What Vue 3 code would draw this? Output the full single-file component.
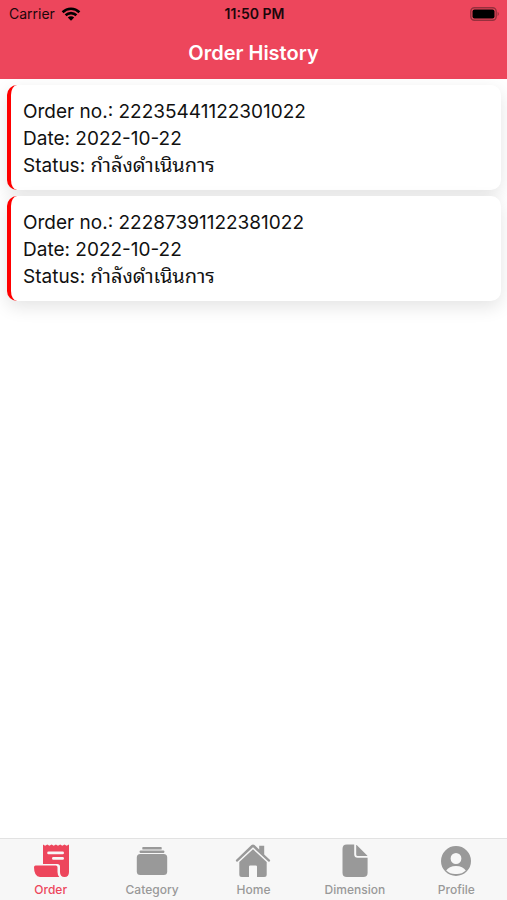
<template>
  <div class="screen">
    <header class="header">
      <div class="status-bar">
        <div class="carrier">
          <span>Carrier</span>
          <svg class="wifi" viewBox="0 0 20 14" aria-hidden="true">
            <path d="M1.6 5.2a12 12 0 0 1 16.8 0" />
            <path d="M4.6 8.3a7.8 7.8 0 0 1 10.8 0" />
            <path class="wifi-dot" d="M10 13.8 6.8 10.6a4.6 4.6 0 0 1 6.4 0z" />
          </svg>
        </div>
        <time class="clock">11:50 PM</time>
        <svg class="battery" viewBox="0 0 30 14" aria-hidden="true">
          <rect class="battery-frame" x="0.8" y="0.8" width="25.4" height="12.4" rx="3.6" />
          <rect x="2.5" y="2.5" width="22" height="9" rx="2" />
          <path class="battery-tip" d="M27.6 4.8q2.6 2.2 0 4.4z" />
        </svg>
      </div>
      <h1 class="title">Order History</h1>
    </header>

    <main class="orders">
      <article v-for="order in orders" :key="order.no" class="card">
        <p>Order no.: {{ order.no }}</p>
        <p>Date: {{ order.date }}</p>
        <p>Status: <span class="thai" lang="th">{{ order.status }}</span></p>
      </article>
    </main>

    <nav class="tabs">
      <a
        v-for="tab in tabs"
        :key="tab.label"
        href="#"
        class="tab"
        :class="{ active: tab.label === current }"
        @click.prevent="current = tab.label"
      >
        <svg class="tab-icon" viewBox="0 0 36 36" aria-hidden="true">
          <path v-for="d in tab.paths" :key="d" :d="d" fill-rule="evenodd" />
        </svg>
        <span>{{ tab.label }}</span>
      </a>
    </nav>
  </div>
</template>

<script setup>
import { ref } from 'vue';

const orders = [
  { no: '22235441122301022', date: '2022-10-22', status: 'กำลังดำเนินการ' },
  { no: '22287391122381022', date: '2022-10-22', status: 'กำลังดำเนินการ' },
];

const current = ref('Order');

const tabs = [
  {
    label: 'Order',
    paths: [
      // paper with torn top edge and two text lines
      'M10 1.6l2.1 1.2 2.2-1.2 2.1 1.2 2.2-1.2 2.1 1.2 2.2-1.2 2.1 1.2 2.2-1.2 2.1 1.2 2.2-1.2 2.1 1.2L36 1.6V29q0 5-4.4 5-4.6 0-4.6-5v-5.3q0-2.8-2.8-2.8H10zM15.6 8.5a1.4 1.4 0 0 0 0 2.8h14a1.4 1.4 0 0 0 0-2.8zM20.4 14a1.4 1.4 0 0 0 0 2.8h9.2a1.4 1.4 0 0 0 0-2.8z',
      // rolled end
      'M2.6 22.5h20.2q1.7 0 1.7 1.7V29q0 3 1.8 5H7Q1 33.4 1 24.2q0-1.7 1.6-1.7z',
    ],
  },
  {
    label: 'Category',
    paths: [
      'M9 4h18q.7 0 .7.8v1.1q0 .7-.7.7H9q-.7 0-.7-.7V4.8Q8.3 4 9 4z',
      'M6.5 7.5h23q.8 0 .8.8v.9q0 .7-.8.7h-23q-.8 0-.8-.7v-.9q0-.8.8-.8z',
      'M6.3 10.9h23.4q3.5 0 3.5 3.5v14.2q0 3.5-3.5 3.5H6.3q-3.5 0-3.5-3.5V14.4q0-3.5 3.5-3.5z',
    ],
  },
  {
    label: 'Home',
    paths: [
      'M18 1.5q.8 0 1.5.6l4.7 4.5V2.8h5v8.6l5.6 5.3q.8.8.1 1.6t-1.6.1L18 4.3 2.7 18.4q-.9.7-1.6-.1t.1-1.6L16.5 2.1Q17.200 1.5 18 1.5z',
      'M18 6.2 31.7 19v12.5q0 2.5-2.5 2.5H22V23.6q0-1.2-1.2-1.2h-5.6q-1.2 0-1.2 1.2V34H6.8q-2.5 0-2.5-2.5V19z',
    ],
  },
  {
    label: 'Dimension',
    paths: [
      'M9.8 1.6h7.4v9.7q0 3.5 3.5 3.5h9.9v14.9q0 4.3-4.3 4.3H9.8q-4.3 0-4.3-4.3V5.9q0-4.3 4.3-4.3z',
      'M19.2 2.3q0-.7.5-.2L30.2 12.6q.5.5-.2.5h-9.300q-1.5 0-1.5-1.5z',
    ],
  },
  {
    label: 'Profile',
    paths: [
      'M18 3a15 15 0 1 0 0 30a15 15 0 1 0 0-30zM18 10a5.4 5.5 0 1 1 0 11a5.4 5.5 0 1 1 0-11zM18 23c4.6 0 8.1 1.8 9.8 4.5A13 13 0 0 1 18 31a13 13 0 0 1-9.8-3.5C9.9 24.8 13.4 23 18 23z',
    ],
  },
];
</script>

<style>
body {
  background: #fff;
}
</style>

<style scoped>
.screen {
  display: flex;
  flex-direction: column;
  min-height: 100vh;
  color: #111;
  font-family: Inter, 'Liberation Sans', sans-serif;
}

.header {
  height: 79px;
  background: #ed465c;
}

.status-bar {
  display: grid;
  grid-template-columns: 1fr auto 1fr;
  align-items: center;
  height: 27px;
  padding: 0 7px 0 9px;
  color: #1c070b;
  font-size: 14px;
  line-height: 27px;
}

.carrier {
  display: flex;
  align-items: center;
  gap: 6px;
}

.wifi {
  width: 20px;
  height: 14px;
  fill: none;
  stroke: #000;
  stroke-width: 2.6;
}

.wifi-dot {
  fill: #000;
  stroke: none;
}

.clock {
  font-weight: 600;
}

.battery {
  justify-self: end;
  width: 30px;
  height: 14px;
}

.battery-frame {
  fill: none;
  stroke: #96303d;
  stroke-width: 1.4;
}

.battery-tip {
  fill: #96303d;
}

.title {
  margin: 0;
  color: #fff;
  font-size: 20px;
  font-weight: 600;
  line-height: 52px;
  text-align: center;
}

.orders {
  flex: 1;
  display: flex;
  flex-direction: column;
  gap: 6px;
  padding: 6px 6px 0 7px;
}

.card {
  padding: 13px 12px 11px;
  border-left: 4px solid #f00;
  border-radius: 10px;
  background: #fff;
  box-shadow: 0 6px 18px rgba(0, 0, 0, 0.11);
  font-size: 19px;
  line-height: 27px;
}

.card p {
  margin: 0;
}

.thai {
  font-family: 'Noto Sans Thai Looped', 'Noto Looped Thai', Loma, Garuda, Waree, 'Noto Serif Thai', 'Noto Sans Thai', sans-serif;
  font-size: 20px;
  line-height: 1;
}

.tabs {
  display: grid;
  grid-template-columns: repeat(5, 1fr);
  height: 61px;
  border-top: 1px solid #e2e2e2;
  background: #f7f7f7;
}

.tab {
  display: flex;
  flex-direction: column;
  align-items: center;
  gap: 3px;
  padding-top: 4px;
  color: #999;
  font-size: 12px;
  font-weight: 500;
  line-height: 16px;
  text-decoration: none;
}

.tab.active {
  color: #ed465c;
}

.tab-icon {
  width: 36px;
  height: 36px;
  fill: currentColor;
}
</style>
